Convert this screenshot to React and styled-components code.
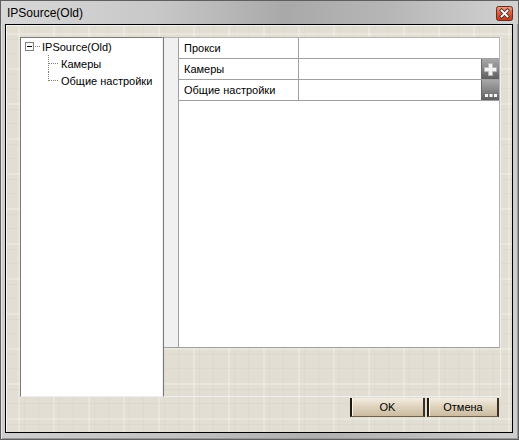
import React from 'react';
import styled, { createGlobalStyle } from 'styled-components';

const GlobalStyle = createGlobalStyle`
  html, body {
    margin: 0;
    padding: 0;
    background: #ffffff;
  }
  body {
    font-family: "Liberation Sans", Arial, sans-serif;
    font-size: 11px;
    color: #000;
  }
  * {
    box-sizing: border-box;
  }
`;

const texture = `
  background-color: #e2ded3;
  background-image:
    linear-gradient(90deg, rgba(255, 255, 255, 0.25) 2px, transparent 2px),
    linear-gradient(rgba(255, 255, 255, 0.25) 2px, transparent 2px),
    linear-gradient(90deg, transparent 6px, rgba(205, 175, 165, 0.14) 6px, rgba(205, 175, 165, 0.14) 7px, transparent 7px, transparent 20px, rgba(205, 175, 165, 0.14) 20px, rgba(205, 175, 165, 0.14) 21px, transparent 21px),
    linear-gradient(transparent 6px, rgba(205, 175, 165, 0.14) 6px, rgba(205, 175, 165, 0.14) 7px, transparent 7px, transparent 20px, rgba(205, 175, 165, 0.14) 20px, rgba(205, 175, 165, 0.14) 21px, transparent 21px);
  background-size: 35px 35px;
  background-position: 12px 8px;
`;

const Window = styled.div`
  width: 519px;
  height: 440px;
  display: flex;
  flex-direction: column;
  border: 1px solid #5f5f5f;
  background: linear-gradient(90deg, #cfcfcf 0%, #c2c2c2 35%, #b0b0b0 60%, #bdbdbd 80%, #cfcfcf 100%);
  box-shadow: inset 1px 1px 0 #e4e4e4, inset -1px -1px 0 #9a9a9a;
`;

const TitleBar = styled.div`
  height: 23px;
  display: flex;
  align-items: center;
  justify-content: space-between;
  padding: 0 5px 0 6px;
  background: linear-gradient(90deg, #d8d8d8 0%, #c8c8c8 30%, #a9a9a9 55%, #b6b6b6 75%, #d2d2d2 100%);
`;

const Title = styled.span`
  font-family: "Liberation Sans", Arial, sans-serif;
  font-size: 12px;
  color: #000;
  padding-top: 1px;
`;

const CloseButton = styled.div`
  width: 17px;
  height: 15px;
  margin-top: 1px;
  display: flex;
`;

const Frame = styled.div`
  flex: 1;
  margin: 0 5px 6px 4px;
  border: 1px solid #000;
  box-shadow: inset 1px 1px 0 #f4f4f4;
  padding: 12px 11px 15px 14px;
  display: flex;
  flex-direction: column;
  ${texture}
`;

const Content = styled.div`
  flex: 1;
  display: flex;
  min-height: 0;
`;

const TreePanel = styled.div`
  width: 143px;
  background: #fff;
  border-top: 1px solid #7a7a7a;
  border-left: 1px solid #7a7a7a;
  border-right: 1px solid #efefef;
  border-bottom: 1px solid #efefef;
`;

const TreeRow = styled.div`
  height: 17px;
  display: flex;
  align-items: center;
  padding-left: ${p => p.$indent}px;
  white-space: nowrap;
`;

const Expander = styled.span`
  width: 9px;
  height: 9px;
  border: 1px solid #808080;
  background: #fff;
  position: relative;
  flex: none;

  &::after {
    content: '';
    position: absolute;
    left: 1px;
    top: 3px;
    width: 5px;
    height: 1px;
    background: #000;
  }
`;

const RootConnector = styled.span`
  width: 6px;
  height: 1px;
  margin: 0 1px 0 0;
  background-image: linear-gradient(90deg, #808080 1px, transparent 1px);
  background-size: 2px 1px;
  background-position: 1px 0;
  flex: none;
`;

const TreeLabel = styled.span`
  padding-left: 1px;
`;

const RightPanel = styled.div`
  flex: 1;
  display: flex;
  flex-direction: column;
  border-left: 1px solid #7a7a7a;
  border-right: 1px solid #efefef;
  border-bottom: 1px solid #efefef;
`;

const Grid = styled.div`
  height: 311px;
  display: flex;
  border-top: 1px solid #b4b4b4;
  border-bottom: 1px solid #a0a0a0;
  border-right: 1px solid #b4b4b4;
`;

const Gutter = styled.div`
  width: 15px;
  background: #f0f0f0;
  border-right: 1px solid #a0a0a0;
`;

const Table = styled.div`
  flex: 1;
  background: #fff;
`;

const Row = styled.div`
  height: 21px;
  display: flex;
  border-bottom: 1px solid #a0a0a0;
`;

const NameCell = styled.div`
  width: 120px;
  border-right: 1px solid #a0a0a0;
  padding-left: 5px;
  display: flex;
  align-items: center;
`;

const ValueCell = styled.div`
  flex: 1;
  display: flex;
  justify-content: flex-end;
`;

const CellButton = styled.div`
  width: 18px;
  height: 20px;
  background: linear-gradient(#a8a8a8 0%, #8a8a8a 45%, #5e5e5e 100%);
  border-left: 1px solid #6a6a6a;
  display: flex;
  align-items: center;
  justify-content: center;
  flex: none;
`;

const Description = styled.div`
  flex: 1;
`;

const Footer = styled.div`
  height: 20px;
  display: flex;
  justify-content: flex-end;
  align-items: flex-end;
  gap: 2px;
  padding-right: 2px;
`;

const DialogButton = styled.button`
  width: ${p => p.$width}px;
  height: 19px;
  padding: 0;
  font-family: "Liberation Sans", Arial, sans-serif;
  font-size: 11px;
  color: #000;
  background: linear-gradient(#f3ede2 0%, #e2d7c3 40%, #cbbb9f 100%);
  border: none;
  border-left: 2px solid #1e1a12;
  border-right: 2px solid #3a3124;
  border-bottom: 1px solid #6e624c;
  box-shadow: inset 1px 0 0 #fff8ea;
  cursor: default;
`;

function CloseIcon() {
  return (
    <svg width="17" height="15" viewBox="0 0 17 15">
      <defs>
        <linearGradient id="cg" x1="0" y1="0" x2="0" y2="1">
          <stop offset="0" stopColor="#eaa08a" />
          <stop offset="0.5" stopColor="#d45a3c" />
          <stop offset="1" stopColor="#c2381c" />
        </linearGradient>
      </defs>
      <rect x="0.5" y="0.5" width="16" height="14" rx="2" fill="url(#cg)" stroke="#6e2a1c" />
      <path d="M5.5 4.5 L11.5 10.5 M11.5 4.5 L5.5 10.5" stroke="#4a2a22" strokeWidth="3.4" strokeLinecap="square" />
      <path d="M5.5 4.5 L11.5 10.5 M11.5 4.5 L5.5 10.5" stroke="#fff" strokeWidth="1.8" strokeLinecap="square" />
    </svg>
  );
}

function ChildConnector({ last }) {
  return (
    <svg width="12" height="17" viewBox="0 0 12 17" shapeRendering="crispEdges" style={{ flex: 'none' }}>
      <line x1="0.5" y1="0" x2="0.5" y2={last ? 9 : 17} stroke="#808080" strokeDasharray="1 1" />
      <line x1="1" y1="8.5" x2="10" y2="8.5" stroke="#808080" strokeDasharray="1 1" />
    </svg>
  );
}

function PlusIcon() {
  return (
    <svg width="15" height="15" viewBox="0 0 15 15">
      <path d="M5.5 1.5h4v4h4v4h-4v4h-4v-4h-4v-4h4z" fill="#f2f2f2" stroke="#b8b8b8" strokeWidth="0.8" />
    </svg>
  );
}

function DotsIcon() {
  return (
    <svg width="14" height="20" viewBox="0 0 14 20">
      <rect x="1" y="14" width="3" height="3" fill="#f6f6f6" />
      <rect x="5.5" y="14" width="3" height="3" fill="#f6f6f6" />
      <rect x="10" y="14" width="3" height="3" fill="#f6f6f6" />
    </svg>
  );
}

const properties = [
  { name: 'Прокси', button: null },
  { name: 'Камеры', button: 'plus' },
  { name: 'Общие настройки', button: 'dots' },
];

export default function App() {
  return (
    <>
      <GlobalStyle />
      <Window>
        <TitleBar>
          <Title>IPSource(Old)</Title>
          <CloseButton>
            <CloseIcon />
          </CloseButton>
        </TitleBar>
        <Frame>
          <Content>
            <TreePanel>
              <TreeRow $indent={4}>
                <Expander />
                <RootConnector />
                <TreeLabel>IPSource(Old)</TreeLabel>
              </TreeRow>
              <TreeRow $indent={27}>
                <ChildConnector />
                <TreeLabel>Камеры</TreeLabel>
              </TreeRow>
              <TreeRow $indent={27}>
                <ChildConnector last />
                <TreeLabel>Общие настройки</TreeLabel>
              </TreeRow>
            </TreePanel>
            <RightPanel>
              <Grid>
                <Gutter />
                <Table>
                  {properties.map(p => (
                    <Row key={p.name}>
                      <NameCell>{p.name}</NameCell>
                      <ValueCell>
                        {p.button && (
                          <CellButton>
                            {p.button === 'plus' ? <PlusIcon /> : <DotsIcon />}
                          </CellButton>
                        )}
                      </ValueCell>
                    </Row>
                  ))}
                </Table>
              </Grid>
              <Description />
            </RightPanel>
          </Content>
          <Footer>
            <DialogButton $width={75}>OK</DialogButton>
            <DialogButton $width={72}>Отмена</DialogButton>
          </Footer>
        </Frame>
      </Window>
    </>
  );
}
